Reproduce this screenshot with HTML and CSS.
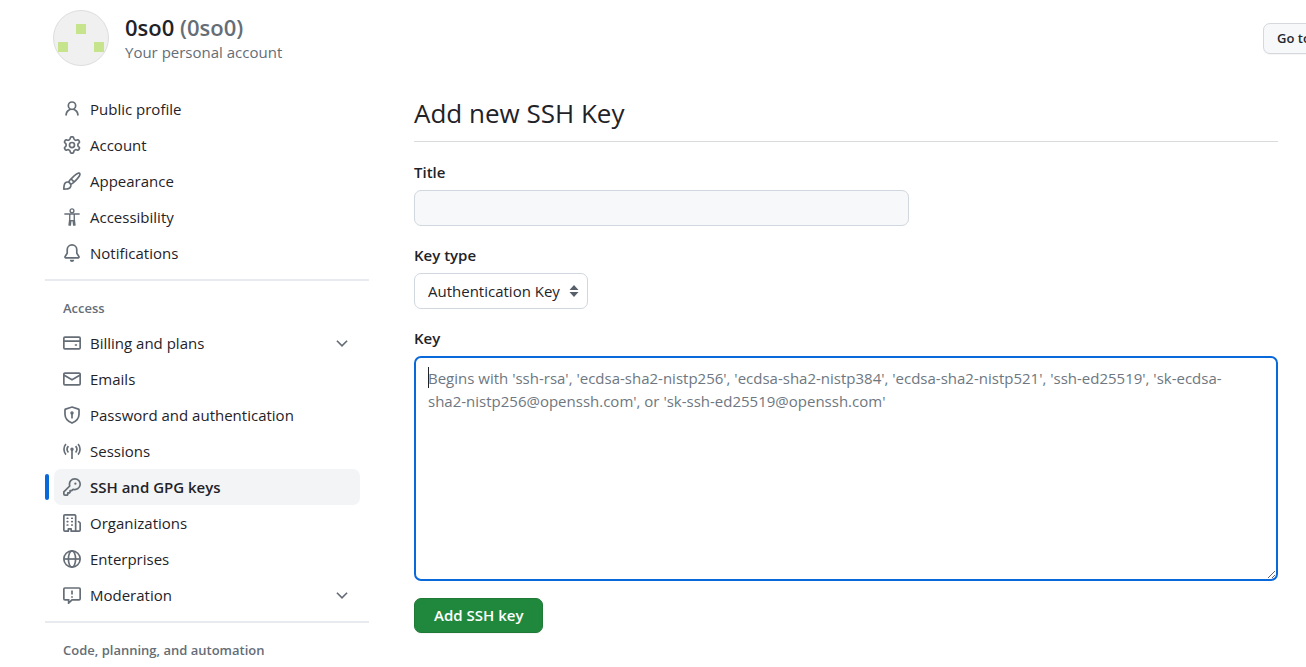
FILE: index.html
```html
<!DOCTYPE html>
<html lang="en">
<head>
<meta charset="utf-8">
<title>Add new SSH Key</title>
<link rel="stylesheet" href="styles.css">
</head>
<body>
<header class="account">
  <svg class="avatar" viewBox="0 0 56 56" aria-hidden="true">
    <circle cx="28" cy="28" r="27.5" fill="#f0f0f0" stroke="#dcdddf"/>
    <path fill="#c6e48b" d="M23 14h10v10H23zM5 32h10v10H5zM41 32h10v10H41z"/>
  </svg>
  <div class="account-text">
    <h1 class="account-name">0so0 <span class="muted">(0so0)</span></h1>
    <p class="account-note">Your personal account</p>
  </div>
  <div class="account-action"><button class="button" type="button">Go to your personal profile</button></div>
</header>
<div class="layout">
  <nav class="sidebar" aria-label="Settings">
    <ul class="menu">
      <li><a class="item" href="#"><svg class="icon" viewBox="0 0 16 16"><path d="M10.561 8.073a6.005 6.005 0 0 1 3.432 5.142.75.75 0 1 1-1.498.07 4.5 4.5 0 0 0-8.99 0 .75.75 0 0 1-1.498-.07 6.004 6.004 0 0 1 3.431-5.142 3.999 3.999 0 1 1 5.123 0ZM10.5 5a2.5 2.5 0 1 0-5 0 2.5 2.5 0 0 0 5 0Z"/></svg>Public profile</a></li>
      <li><a class="item" href="#"><svg class="icon" viewBox="0 0 16 16"><path d="M8 0a8.2 8.2 0 0 1 .701.031C9.444.095 9.99.645 10.16 1.29l.288 1.107c.018.066.079.158.212.224.231.114.454.243.668.386.123.082.233.09.299.071l1.103-.303c.644-.176 1.392.021 1.82.63.27.385.506.792.704 1.218.315.675.111 1.422-.364 1.891l-.814.806c-.049.048-.098.147-.088.294.016.257.016.515 0 .772-.01.147.038.246.088.294l.814.806c.475.469.679 1.216.364 1.891a7.977 7.977 0 0 1-.704 1.217c-.428.61-1.176.807-1.82.63l-1.102-.302c-.067-.019-.177-.011-.3.071a5.909 5.909 0 0 1-.668.386c-.133.066-.194.158-.211.224l-.29 1.106c-.168.646-.715 1.196-1.458 1.26a8.006 8.006 0 0 1-1.402 0c-.743-.064-1.289-.614-1.458-1.26l-.289-1.106c-.018-.066-.079-.158-.212-.224a5.738 5.738 0 0 1-.668-.386c-.123-.082-.233-.09-.299-.071l-1.103.303c-.644.176-1.392-.021-1.82-.63a8.12 8.12 0 0 1-.704-1.218c-.315-.675-.111-1.422.363-1.891l.815-.806c.05-.048.098-.147.088-.294a6.214 6.214 0 0 1 0-.772c.01-.147-.038-.246-.088-.294l-.815-.806C.635 6.045.431 5.298.746 4.623a7.92 7.92 0 0 1 .704-1.217c.428-.61 1.176-.807 1.82-.63l1.102.302c.067.019.177.011.3-.071.214-.143.437-.272.668-.386.133-.066.194-.158.211-.224l.29-1.106C6.009.645 6.556.095 7.299.03 7.53.01 7.764 0 8 0Zm-.571 1.525c-.036.003-.108.036-.137.146l-.289 1.105c-.147.561-.549.967-.998 1.189-.173.086-.34.183-.5.29-.417.278-.97.423-1.529.27l-1.103-.303c-.109-.03-.175.016-.195.045-.22.312-.412.644-.573.99-.014.031-.021.11.059.19l.815.806c.411.406.562.957.53 1.456a4.709 4.709 0 0 0 0 .582c.032.499-.119 1.05-.53 1.456l-.815.806c-.081.08-.073.159-.059.19.162.346.353.677.573.989.02.03.085.076.195.046l1.102-.303c.56-.153 1.113-.008 1.53.27.161.107.328.204.501.29.447.222.85.629.997 1.189l.289 1.105c.029.109.101.143.137.146a6.6 6.6 0 0 0 1.142 0c.036-.003.108-.036.137-.146l.289-1.105c.147-.561.549-.967.998-1.189.173-.086.34-.183.5-.29.417-.278.97-.423 1.529-.27l1.103.303c.109.029.175-.016.195-.045.22-.313.411-.644.573-.99.014-.031.021-.11-.059-.19l-.815-.806c-.411-.406-.562-.957-.53-1.456a4.709 4.709 0 0 0 0-.582c-.032-.499.119-1.05.53-1.456l.815-.806c.081-.08.073-.159.059-.19a6.464 6.464 0 0 0-.573-.989c-.02-.03-.085-.076-.195-.046l-1.102.303c-.56.153-1.113.008-1.53-.27a4.44 4.44 0 0 0-.501-.29c-.447-.222-.85-.629-.997-1.189l-.289-1.105c-.029-.11-.101-.143-.137-.146a6.6 6.6 0 0 0-1.142 0ZM11 8a3 3 0 1 1-6 0 3 3 0 0 1 6 0ZM9.5 8a1.5 1.5 0 1 0-3.001.001A1.5 1.5 0 0 0 9.5 8Z"/></svg>Account</a></li>
      <li><a class="item" href="#"><svg class="icon" viewBox="0 0 16 16"><path d="M11.134 1.535c.7-.509 1.416-.942 2.076-1.155.649-.21 1.463-.267 2.069.34.603.601.568 1.411.368 2.07-.202.668-.624 1.39-1.125 2.096-1.011 1.424-2.496 2.987-3.775 4.249-1.098 1.084-2.132 1.839-3.04 2.3a3.744 3.744 0 0 1-1.055 3.217c-.431.431-1.065.691-1.657.861-.614.177-1.294.287-1.914.357A21.151 21.151 0 0 1 .797 16H.743a.75.75 0 0 1-.743-.742v-.054a21.25 21.25 0 0 1 .13-2.284c.067-.647.187-1.287.358-1.914.17-.591.43-1.226.86-1.657a3.746 3.746 0 0 1 3.227-1.054c.466-.893 1.225-1.907 2.314-2.982 1.271-1.255 2.833-2.75 4.245-3.777ZM1.62 13.089c-.051.464-.086.929-.104 1.395.466-.018.932-.053 1.396-.104a10.511 10.511 0 0 0 1.668-.309c.526-.151.856-.325 1.011-.48a2.25 2.25 0 1 0-3.182-3.182c-.155.155-.329.485-.48 1.01a10.515 10.515 0 0 0-.309 1.67Zm10.396-10.34c-1.224.89-2.605 2.189-3.822 3.384l1.718 1.718c1.21-1.205 2.51-2.597 3.387-3.833.47-.662.78-1.227.912-1.662.134-.444.032-.551.009-.575h-.001V1.78c-.014-.014-.113-.113-.548.027-.432.14-.995.462-1.655.942Zm-4.832 7.266-.001.001a9.859 9.859 0 0 0 1.63-1.142L7.155 7.216a9.7 9.7 0 0 0-1.161 1.607c.482.302.889.71 1.19 1.192Z"/></svg>Appearance</a></li>
      <li><a class="item" href="#"><svg class="icon line figure" viewBox="0 0 16 16"><circle cx="8" cy="2.5" r="1.7"/><path d="M1.200 5.300h13.600M6 5.300v4.500l-.7 5.900M10 5.300v4.500l.7 5.900M6.100 11.200h3.800M7 11.200l-.5 4.400M9 11.200l.5 4.400"/></svg>Accessibility</a></li>
      <li><a class="item" href="#"><svg class="icon" viewBox="0 0 16 16"><path d="M8 16a2 2 0 0 0 1.985-1.750c.017-.137-.097-.25-.235-.25h-3.500c-.138 0-.252.113-.235.25A2 2 0 0 0 8 16ZM3 5a5 5 0 0 1 10 0v2.947c0 .05.015.098.042.139l1.703 2.555A1.519 1.519 0 0 1 13.482 13H2.518a1.516 1.516 0 0 1-1.263-2.36l1.703-2.554A.255.255 0 0 0 3 7.947Zm5-3.500A3.500 3.500 0 0 0 4.500 5v2.947c0 .346-.102.683-.294.97l-1.703 2.556a.017.017 0 0 0-.003.01l.001.006c0 .002.002.004.004.006l.006.004.007.001h10.964l.007-.001.006-.004.004-.006.001-.007a.017.017 0 0 0-.003-.01l-1.703-2.554a1.745 1.745 0 0 1-.294-.97V5A3.500 3.500 0 0 0 8 1.500Z"/></svg>Notifications</a></li>
    </ul>
    <section class="group">
      <h2 class="group-title">Access</h2>
      <ul class="menu">
        <li><button class="item" type="button"><svg class="icon line" viewBox="0 0 16 16"><rect x=".75" y="2.75" width="14.5" height="10.500" rx="1"/><path d="M1 6.250h14M10.500 9.750h2"/></svg>Billing and plans<svg class="icon line chevron" viewBox="0 0 16 16"><path d="m3.500 6 4.500 4.500L12.500 6"/></svg></button></li>
        <li><a class="item" href="#"><svg class="icon" viewBox="0 0 16 16"><path d="M1.750 2h12.500c.966 0 1.750.784 1.750 1.750v8.500A1.750 1.750 0 0 1 14.250 14H1.750A1.750 1.750 0 0 1 0 12.250v-8.500C0 2.784.784 2 1.750 2ZM1.500 12.251c0 .138.112.25.25.25h12.500a.25.25 0 0 0 .25-.25V5.809L8.380 9.397a.75.75 0 0 1-.76 0L1.500 5.809v6.442Zm13-8.181v-.32a.25.25 0 0 0-.25-.25H1.750a.25.25 0 0 0-.25.25v.32L8 7.880Z"/></svg>Emails</a></li>
        <li><a class="item" href="#"><svg class="icon line" viewBox="0 0 16 16"><path d="m8 .9 5.700 1.850q.550.180.550.750V7c0 3.600-2 6.300-6.250 8.100C3.750 13.300 1.750 10.600 1.750 7V3.500q0-.57.550-.75ZM8 7v4"/><circle cx="8" cy="6.300" r=".8"/></svg>Password and authentication</a></li>
        <li><a class="item" href="#"><svg class="icon line" viewBox="0 0 16 16"><path d="M2.600 1.800a7.200 7.200 0 0 0 0 9.400M13.400 1.800a7.200 7.200 0 0 1 0 9.400M4.800 3.700a4.300 4.300 0 0 0 0 5.600M11.200 3.700a4.300 4.300 0 0 1 0 5.600M8 7v8"/><circle cx="8" cy="6.500" r=".8"/></svg>Sessions</a></li>
        <li class="current"><a class="item" href="#" aria-current="page"><svg class="icon" viewBox="0 0 16 16"><path d="M10.500 0a5.499 5.499 0 1 1-1.288 10.848l-.932.932a.749.749 0 0 1-.53.22H7v.75a.749.749 0 0 1-.22.53l-.5.5a.749.749 0 0 1-.53.22H5v.75a.749.749 0 0 1-.22.53l-.5.5a.749.749 0 0 1-.53.22h-2A1.750 1.750 0 0 1 0 14.250v-2c0-.199.079-.389.22-.53l4.932-4.932A5.500 5.500 0 0 1 10.500 0Zm-4 5.500c-.001.431.069.86.205 1.269a.75.75 0 0 1-.181.768L1.500 12.560v1.690c0 .138.112.25.25.25h1.690l.06-.06v-1.190a.75.75 0 0 1 .75-.75h1.190l.06-.06v-1.190a.75.75 0 0 1 .75-.75h1.190l1.023-1.025a.75.75 0 0 1 .768-.18A4 4 0 1 0 6.500 5.500ZM11 6a1 1 0 1 1 0-2 1 1 0 0 1 0 2Z"/></svg>SSH and GPG keys</a></li>
        <li><a class="item" href="#"><svg class="icon" viewBox="0 0 16 16"><path d="M1.750 16A1.750 1.750 0 0 1 0 14.250V1.750C0 .784.784 0 1.750 0h8.500C11.216 0 12 .784 12 1.750v12.500c0 .085-.006.168-.018.25h2.268a.25.25 0 0 0 .25-.25V8.285a.25.25 0 0 0-.111-.208l-1.055-.703a.749.749 0 1 1 .832-1.248l1.055.703c.487.325.779.871.779 1.456v5.965A1.750 1.750 0 0 1 14.250 16h-3.500a.766.766 0 0 1-.197-.026c-.099.017-.2.026-.303.026h-3a.75.75 0 0 1-.75-.75V14h-1v1.250a.75.75 0 0 1-.75.75Zm-.25-1.750c0 .138.112.25.25.25H4v-1.250a.75.75 0 0 1 .75-.75h2.500a.75.75 0 0 1 .75.75v1.250h2.250a.25.25 0 0 0 .25-.25V1.750a.25.25 0 0 0-.25-.25h-8.500a.25.25 0 0 0-.25.25ZM3.750 6h.5a.75.75 0 0 1 0 1.500h-.5a.75.75 0 0 1 0-1.500ZM3 3.750A.75.75 0 0 1 3.750 3h.5a.75.75 0 0 1 0 1.500h-.5A.75.75 0 0 1 3 3.750Zm4 3A.75.75 0 0 1 7.750 6h.5a.75.75 0 0 1 0 1.500h-.5A.75.75 0 0 1 7 6.750ZM7.750 3h.5a.75.75 0 0 1 0 1.500h-.5a.75.75 0 0 1 0-1.500ZM3 9.750A.75.75 0 0 1 3.750 9h.5a.75.75 0 0 1 0 1.500h-.5A.75.75 0 0 1 3 9.750ZM7.750 9h.5a.75.75 0 0 1 0 1.500h-.5a.75.75 0 0 1 0-1.500Z"/></svg>Organizations</a></li>
        <li><a class="item" href="#"><svg class="icon line" viewBox="0 0 16 16"><circle cx="8" cy="8" r="7.250"/><ellipse cx="8" cy="8" rx="3.200" ry="7.250"/><path d="M1 8h14"/></svg>Enterprises</a></li>
        <li><button class="item" type="button"><svg class="icon line" viewBox="0 0 16 16"><path d="M1.750 1.750h12.500q1 0 1 1v8.500q0 1-1 1H8L5 15.200v-2.950H1.750q-1 0-1-1v-8.500q0-1 1-1ZM8 4v3.500M8 9v1.500"/></svg>Moderation<svg class="icon line chevron" viewBox="0 0 16 16"><path d="m3.500 6 4.500 4.500L12.500 6"/></svg></button></li>
      </ul>
    </section>
    <section class="group">
      <h2 class="group-title">Code, planning, and automation</h2>
    </section>
  </nav>
  <main class="content">
    <h2 class="page-title">Add new SSH Key</h2>
    <form class="form">
      <div class="field">
        <label for="title">Title</label>
        <input class="control title-input" id="title" type="text">
      </div>
      <div class="field">
        <label for="type">Key type</label>
        <div class="select-wrap">
          <select class="control type-select" id="type"><option>Authentication Key</option><option>Signing Key</option></select>
          <svg class="arrows" viewBox="0 0 10 12" aria-hidden="true"><path d="M5 0l4.500 5h-9zM5 12L.5 7h9z"/></svg>
        </div>
      </div>
      <div class="field">
        <label for="key">Key</label>
        <div class="key-wrap">
          <textarea class="control key-input" id="key" placeholder="Begins with 'ssh-rsa', 'ecdsa-sha2-nistp256', 'ecdsa-sha2-nistp384', 'ecdsa-sha2-nistp521', 'ssh-ed25519', 'sk-ecdsa-sha2-nistp256@openssh.com', or 'sk-ssh-ed25519@openssh.com'"></textarea>
        </div>
      </div>
      <button class="button primary" type="submit">Add SSH key</button>
    </form>
  </main>
</div>
</body>
</html>
```
FILE: styles.css
```css
* { box-sizing: border-box; }

body {
  margin: 0;
  overflow: hidden;
  background: #fff;
  color: #1f2328;
  font: 15px/24px "Open Sans", "Noto Sans", sans-serif;
}

h1, h2, p, ul { margin: 0; padding: 0; }
ul { list-style: none; }

.account {
  display: flex;
  align-items: center;
  gap: 16px;
  padding: 10px 0 0 53px;
  overflow: hidden;
}
.avatar { width: 56px; height: 56px; }
.account-text { flex: 1; }
.account-name { font-size: 22px; line-height: 28px; font-weight: 600; }
.muted { color: #656d76; }
.account-note { color: #656d76; line-height: 22px; }
.account-action { width: 43px; }

.button {
  padding: 0 13px;
  border: 1px solid #d5d8dc;
  border-radius: 7px;
  background: #f6f8fa;
  box-shadow: 0 1px 0 #1f23280a;
  color: #24292f;
  font: 600 13px/29px "Open Sans", "Noto Sans", sans-serif;
  white-space: nowrap;
}
.button.primary {
  align-self: flex-start;
  padding: 0 19px;
  border-color: #1f7a37;
  background: #1f883d;
  color: #fff;
  font-size: 15px;
  line-height: 33px;
}

.layout {
  display: flex;
  gap: 45px;
  padding: 25px 28px 0 45px;
}
.sidebar { flex: 0 0 324px; }
.menu { padding: 0 9px; }
.item {
  display: flex;
  align-items: center;
  gap: 9px;
  width: 100%;
  height: 36px;
  padding: 0 9px;
  border: 0;
  border-radius: 7px;
  background: none;
  color: inherit;
  font: inherit;
  text-align: left;
  text-decoration: none;
}
.icon { flex: none; width: 18px; height: 18px; fill: #656d76; }
.line { fill: none; stroke: #656d76; stroke-width: 1.5; }
.figure { stroke-width: 1.2; }
.chevron { margin-left: auto; }
.current { position: relative; }
.current .item { background: #f3f4f6; font-weight: 600; }
.current::before {
  content: "";
  position: absolute;
  top: 5px;
  bottom: 5px;
  left: -9px;
  width: 4px;
  border-radius: 4px;
  background: #0969da;
}
.group { margin-top: 8px; border-top: 2px solid #e7ebef; }
.group-title {
  padding: 16px 18px 6px;
  color: #656d76;
  font-size: 13px;
  line-height: 22px;
  font-weight: 600;
}

.content { flex: 1; min-width: 0; }
.page-title {
  padding: 3px 0 9px;
  border-bottom: 1px solid #d8dcdf;
  font-size: 26px;
  line-height: 38px;
  font-weight: 400;
}
.form { display: flex; flex-direction: column; gap: 17px; padding-top: 18px; }
.field { display: flex; flex-direction: column; align-items: flex-start; gap: 6px; }
.field label { font-weight: 600; }
.control {
  display: block;
  height: 36px;
  padding: 0 13px;
  border: 1px solid #d0d7de;
  border-radius: 7px;
  background: #fff;
  color: inherit;
  font: inherit;
}
.title-input { width: 100%; max-width: 495px; background: #f6f8fa; }
.select-wrap { position: relative; }
.type-select { padding-right: 27px; appearance: none; }
.arrows {
  position: absolute;
  top: 12px;
  right: 9px;
  width: 10px;
  height: 12px;
  fill: #57606a;
  pointer-events: none;
}
.key-wrap { position: relative; width: 100%; }
.key-wrap::before {
  content: "";
  position: absolute;
  top: 11px;
  left: 14px;
  width: 1px;
  height: 21px;
  background: #1f2328;
}
.key-input {
  width: 100%;
  height: 225px;
  padding: 9px 32px 9px 12px;
  border: 2px solid #0969da;
  outline: 0;
  caret-color: transparent;
  line-height: 23px;
  resize: vertical;
}
.key-input::placeholder { color: #6e7781; }
```
